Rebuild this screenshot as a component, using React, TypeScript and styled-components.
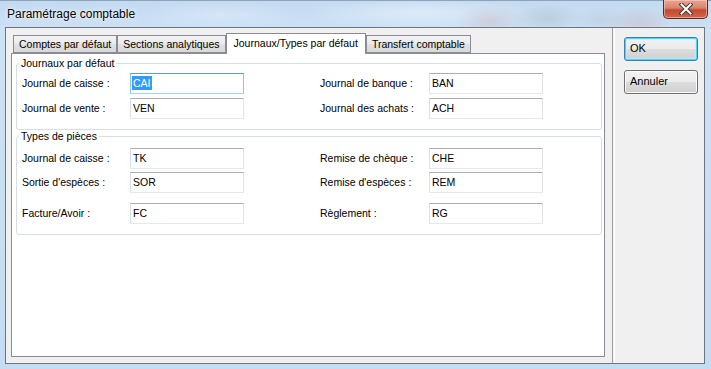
import React from 'react';
import styled, { createGlobalStyle } from 'styled-components';

type Entry = { label: string; value: string; selected?: boolean };
type Line = { left: Entry; right: Entry; space?: number };

const tabs = [
  { label: 'Comptes par défaut' },
  { label: 'Sections analytiques' },
  { label: 'Journaux/Types par défaut', active: true },
  { label: 'Transfert comptable' },
];

const journaux: Line[] = [
  {
    left: { label: 'Journal de caisse :', value: 'CAI', selected: true },
    right: { label: 'Journal de banque :', value: 'BAN' },
  },
  {
    left: { label: 'Journal de vente :', value: 'VEN' },
    right: { label: 'Journal des achats :', value: 'ACH' },
    space: 4,
  },
];

const pieces: Line[] = [
  {
    left: { label: 'Journal de caisse :', value: 'TK' },
    right: { label: 'Remise de chèque :', value: 'CHE' },
  },
  {
    left: { label: "Sortie d'espèces :", value: 'SOR' },
    right: { label: "Remise d'espèces :", value: 'REM' },
    space: 3,
  },
  {
    left: { label: 'Facture/Avoir :', value: 'FC' },
    right: { label: 'Règlement :', value: 'RG' },
    space: 10,
  },
];

const App = () => {
  const renderLines = (lines: Line[]) =>
    lines.map((line, i) => (
      <Row key={i} $space={line.space ?? 0}>
        <Label>{line.left.label}</Label>
        <Field $focused={line.left.selected}>
          {line.left.selected ? <Selection>{line.left.value}</Selection> : line.left.value}
        </Field>
        <span />
        <Label>{line.right.label}</Label>
        <Field>{line.right.value}</Field>
      </Row>
    ));

  return (
    <>
      <GlobalStyle />
      <Window>
        <TitleBar>
          <Title>Paramétrage comptable</Title>
          <CloseButton>
            <svg width="14" height="12" viewBox="0 0 14 12">
              <path d="M2.5 1.5 L11.5 10.5 M11.5 1.5 L2.5 10.5" stroke="#3a3a3a" strokeWidth="4" strokeLinecap="square" />
              <path d="M2.5 1.5 L11.5 10.5 M11.5 1.5 L2.5 10.5" stroke="#ffffff" strokeWidth="2" strokeLinecap="square" />
            </svg>
          </CloseButton>
        </TitleBar>
        <Client>
          <MainPane>
            <TabRow>
              {tabs.map((t) => (
                <Tab key={t.label} $active={t.active}>
                  {t.label}
                </Tab>
              ))}
            </TabRow>
            <Panel>
              <Group $padTop={4}>
                <Legend>Journaux par défaut</Legend>
                {renderLines(journaux)}
              </Group>
              <Group $padTop={6}>
                <Legend>Types de pièces</Legend>
                {renderLines(pieces)}
              </Group>
            </Panel>
          </MainPane>
          <Separator />
          <ButtonColumn>
            <Button $default>OK</Button>
            <Button>Annuler</Button>
          </ButtonColumn>
        </Client>
      </Window>
    </>
  );
};

const GlobalStyle = createGlobalStyle`
  html, body {
    margin: 0;
    padding: 0;
    background: #ffffff;
  }
  body {
    font-family: "Liberation Sans", Arial, sans-serif;
    font-size: 10.5px;
    color: #000000;
  }
`;

const Window = styled.div`
  width: 711px;
  height: 369px;
  display: flex;
  flex-direction: column;
  box-sizing: border-box;
  border-top: 1px solid #8ea3b8;
  background:
    radial-gradient(ellipse 34px 16px at 490px 20px, rgba(200, 140, 135, 0.22), transparent),
    radial-gradient(ellipse 36px 16px at 548px 18px, rgba(130, 150, 140, 0.22), transparent),
    radial-gradient(ellipse 30px 14px at 600px 20px, rgba(160, 170, 175, 0.2), transparent),
    radial-gradient(ellipse 34px 16px at 640px 22px, rgba(200, 130, 120, 0.22), transparent),
    radial-gradient(ellipse 120px 16px at 420px 12px, rgba(235, 244, 252, 0.6), transparent),
    radial-gradient(ellipse 80px 14px at 220px 14px, rgba(225, 238, 250, 0.5), transparent),
    linear-gradient(180deg, #c3daf1 0%, #cee1f5 8%, #c6dcf2 100%);
`;

const TitleBar = styled.div`
  height: 26px;
  display: flex;
  align-items: center;
  padding-left: 7px;
`;

const Title = styled.span`
  font-size: 12px;
  margin-top: -1px;
  text-shadow: 0 0 6px rgba(255, 255, 255, 0.95), 0 0 2px rgba(255, 255, 255, 0.9);
`;

const CloseButton = styled.div`
  align-self: flex-start;
  margin-left: auto;
  margin-right: 3px;
  margin-top: -1px;
  width: 45px;
  height: 19px;
  box-sizing: border-box;
  border: 1px solid #5b2a22;
  border-top: none;
  border-radius: 0 0 5px 5px;
  background: linear-gradient(180deg, #e8a795 0%, #d9836c 45%, #c24a2f 55%, #d6664b 100%);
  box-shadow: inset 0 0 0 1px rgba(255, 210, 200, 0.55);
  display: flex;
  align-items: center;
  justify-content: center;
`;

const Client = styled.div`
  flex: 1;
  display: flex;
  margin: 0 6px 5px 5px;
  border: 1px solid #6d7680;
  background: #f0f0f0;
`;

const MainPane = styled.div`
  width: 606px;
  display: flex;
  flex-direction: column;
  box-sizing: border-box;
  padding: 5px 7px 6px 5px;
`;

const TabRow = styled.div`
  height: 21px;
  display: flex;
  align-items: flex-end;
  padding-left: 2px;
  margin-bottom: -1px;
  position: relative;
  z-index: 1;
`;

const Tab = styled.div<{ $active?: boolean }>`
  box-sizing: border-box;
  height: ${(p) => (p.$active ? '21px' : '18px')};
  margin-bottom: ${(p) => (p.$active ? '0' : '1px')};
  padding: ${(p) => (p.$active ? '3px 7px 0' : '2px 5px 0')};
  border: 1px solid #898c95;
  border-bottom: ${(p) => (p.$active ? 'none' : '1px solid #898c95')};
  background: ${(p) =>
    p.$active ? '#ffffff' : 'linear-gradient(180deg, #f3f3f3 0%, #ebebeb 50%, #e2e2e2 51%, #d8d8d8 100%)'};
  white-space: nowrap;
  line-height: 13px;
`;

const Panel = styled.div`
  flex: 1;
  display: flex;
  flex-direction: column;
  border: 1px solid #898c95;
  background: #ffffff;
  padding: 3px 2px 0 4px;
`;

const Group = styled.fieldset<{ $padTop: number }>`
  margin: 0;
  border: 1px solid #d5dfe5;
  border-radius: 3px;
  padding: ${(p) => p.$padTop}px 4px 10px 5px;
  min-width: 0;
`;

const Legend = styled.legend`
  margin-left: -3px;
  padding: 0 2px;
  line-height: 12px;
  font-size: 10.5px;
`;

const Row = styled.div<{ $space: number }>`
  display: grid;
  grid-template-columns: 108px 114px 76px 109px 114px;
  margin-top: ${(p) => p.$space}px;
`;

const Label = styled.span`
  line-height: 21px;
  white-space: nowrap;
`;

const Field = styled.div<{ $focused?: boolean }>`
  box-sizing: border-box;
  height: 21px;
  line-height: 19px;
  padding-left: 2px;
  border: 1px solid;
  border-color: ${(p) =>
    p.$focused ? '#569de5 #8ec3f3 #a8d0f5 #8ec3f3' : '#abadb3 #e2e3ea #e3e9ef #dbdfe6'};
  background: #ffffff;
`;

const Selection = styled.span`
  display: inline-block;
  margin-left: -1px;
  padding: 0 1px;
  line-height: 14px;
  background: #3399ff;
  color: #ffffff;
`;

const Separator = styled.div`
  width: 1px;
  border-left: 1px solid #a0a0a0;
  border-right: 1px solid #ffffff;
`;

const ButtonColumn = styled.div`
  flex: 1;
  display: flex;
  flex-direction: column;
  gap: 9px;
  padding: 9px 0 0 9px;
`;

const Button = styled.div<{ $default?: boolean }>`
  box-sizing: border-box;
  width: 74px;
  height: 24px;
  line-height: 21px;
  padding-left: 5px;
  border: 1px solid ${(p) => (p.$default ? '#3c7fb1' : '#707070')};
  border-radius: 3px;
  background: linear-gradient(180deg, #f2f2f2 0%, #ebebeb 50%, #dddddd 51%, #cfcfcf 100%);
  box-shadow: ${(p) =>
    p.$default ? 'inset 0 0 0 1px #48d5fb, inset 0 0 0 2px rgba(190, 240, 255, 0.6)' : 'inset 0 0 0 1px #fcfcfc'};
  font-size: 11px;
`;

export default App;
